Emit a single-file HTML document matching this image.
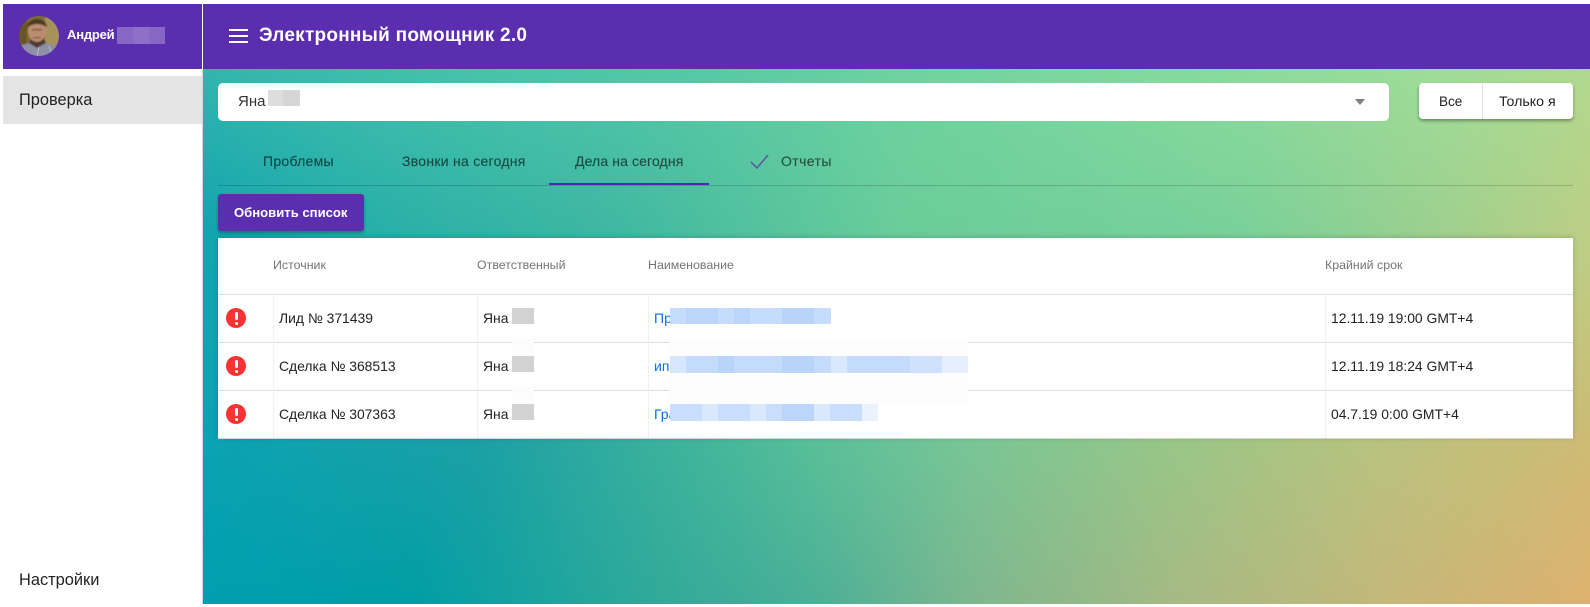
<!DOCTYPE html>
<html lang="ru"><head><meta charset="utf-8"><title>Электронный помощник 2.0</title>
<style>
html,body{margin:0;padding:0;background:#fff}
#p{position:relative;width:1590px;height:607px;overflow:hidden;background:#fff;font-family:"Liberation Sans",sans-serif;color:#222}
#p div,#p svg{position:absolute}
.t{white-space:nowrap;line-height:20px}
.bg{left:203px;top:69px;width:1387px;height:535px}
.r0{background:linear-gradient(90deg,#009fb0 0%,#009ea6 15%,#2aa89b 30%,#4eb097 45%,#7cb78f 55%,#a6ba84 70%,#c4b87a 85%,#dfb170 100%)}
.r1{background:linear-gradient(90deg,#0aa3b2 0%,#1c9fa5 20%,#3fb49b 35%,#5cc098 45%,#78c596 55%,#98c687 70%,#b9c27f 85%,#cdbb74 100%);-webkit-mask-image:linear-gradient(180deg,#000 370px,transparent 535px);mask-image:linear-gradient(180deg,#000 370px,transparent 535px)}
.r2{background:linear-gradient(90deg,#12a5b0 0%,#25aeaa 10%,#40b8a2 30%,#6acd9a 50%,#7ad19a 75%,#a0d08e 90%,#bccf86 100%);-webkit-mask-image:linear-gradient(180deg,#000 161px,transparent 370px);mask-image:linear-gradient(180deg,#000 161px,transparent 370px)}
.r3{background:linear-gradient(90deg,#33b5ad 0%,#48c3aa 20%,#56c8a6 35%,#6dd2a0 50%,#85d99d 70%,#a0dc98 90%,#b0d88e 100%);-webkit-mask-image:linear-gradient(180deg,#000 0,transparent 161px);mask-image:linear-gradient(180deg,#000 0,transparent 161px)}
.tab{font-size:14px;color:rgba(0,0,0,.6);letter-spacing:.27px;-webkit-text-stroke:.15px rgba(0,0,0,.4)}
.hd{font-size:12.4px;color:#757575}
.cell{font-size:13.9px;color:#222}
.ln{background:#e0e0e0;left:218px;width:1355px;height:1px}
.col{background:#f0f0f0;width:1px}
.err{left:226px;width:20px;height:20px;border-radius:50%;background:#f93232}
.err:before{content:"";position:absolute;left:8.5px;top:4px;width:3px;height:8px;background:#fff;border-radius:1.5px}
.err:after{content:"";position:absolute;left:8.5px;top:13.5px;width:3px;height:3px;background:#fff;border-radius:50%}
.link{font-size:14px;color:#0a6ff0}
</style></head><body>
<div id="p">
<div style="left:3px;top:4px;width:199px;height:65px;background:#5b2daf"></div>
<div style="left:203px;top:4px;width:1387px;height:65px;background:#5b2daf"></div>
<div class="bg r0"></div><div class="bg r1"></div><div class="bg r2"></div><div class="bg r3"></div>
<div style="left:202px;top:69px;width:1px;height:535px;background:#d8d8d8"></div>

<svg style="left:19px;top:16px" width="40" height="40" viewBox="0 0 40 40">
<defs><clipPath id="c"><circle cx="20" cy="20" r="20"/></clipPath><filter id="b" x="-10%" y="-10%" width="120%" height="120%"><feGaussianBlur stdDeviation=".8"/></filter></defs>
<g clip-path="url(#c)"><g filter="url(#b)"><rect x="-2" y="-2" width="44" height="44" fill="#7d6a35"/><rect x="26" y="-2" width="16" height="34" fill="#a7935a"/><rect x="-2" y="-2" width="10" height="30" fill="#6b5426"/>
<path d="M-2 42V31l12-4 8 3 8-3 16 4v11z" fill="#8f90a6"/>
<path d="M10 27l8 5 9-5-2-4H12z" fill="#4e3a30"/>
<ellipse cx="18" cy="15" rx="9" ry="11" fill="#bb8d70"/><path d="M8 12c0-6 5-9 10-9s10 3 10 8c-4-2-7-3-10-3s-7 1-10 4z" fill="#4c3a22"/>
<rect x="13" y="13" width="10" height="1.5" fill="#7a5240"/><rect x="14" y="21" width="8" height="1.5" fill="#8c5a48"/></g>
<path d="M3 34l9 5M20 31l-2 10M30 30l3 10" stroke="#d5d5e0" stroke-width="1" opacity=".6"/></g></svg>
<div class="t" style="left:67px;top:25px;font-size:13px;font-weight:bold;color:#fff;letter-spacing:-.2px">Андрей</div>
<svg style="left:117px;top:27px" width="48" height="17"><rect width="48" height="17" fill="#8767c4"/><rect x="16" width="16" height="17" fill="#8f70c8"/></svg>

<svg style="left:229px;top:29px" width="19" height="14"><path d="M0 1h19M0 7h19M0 13h19" stroke="#fff" stroke-width="2"/></svg>
<div class="t" style="left:259px;top:26px;font-size:19px;font-weight:bold;color:#fff;letter-spacing:.25px">Электронный помощник 2.0</div>

<div style="left:3px;top:76px;width:199px;height:48px;background:#e4e4e4"></div>
<div class="t" style="left:19px;top:90px;font-size:16.4px;color:#222">Проверка</div>
<div class="t" style="left:19px;top:570px;font-size:16.4px;color:#222">Настройки</div>

<div style="left:218px;top:83px;width:1171px;height:38px;background:#fff;border-radius:5px"></div>
<div class="t" style="left:238px;top:92px;font-size:15px;color:#333">Яна</div>
<svg style="left:268px;top:90px" width="32" height="16"><rect width="32" height="16" fill="#dddddd"/><rect x="15" width="17" height="16" fill="#d6d6d6"/></svg>
<svg style="left:1354px;top:99px" width="12" height="6"><path d="M1 0h10L6 6z" fill="#808080"/></svg>

<div style="left:1419px;top:83px;width:154px;height:36px;background:#fff;border-radius:4px;box-shadow:0 2px 3px rgba(0,0,0,.35)"></div>
<div style="left:1482px;top:83px;width:1px;height:36px;background:#e2e2e2"></div>
<div class="t" style="left:1439px;top:92px;font-size:13.5px;color:#222">Все</div>
<div class="t" style="left:1499px;top:92px;font-size:14.2px;color:#222">Только я</div>

<div class="t tab" style="left:263px;top:151px">Проблемы</div>
<div class="t tab" style="left:402px;top:151px">Звонки на сегодня</div>
<div class="t tab" style="left:575px;top:151px;letter-spacing:.12px">Дела на сегодня</div>
<svg style="left:750px;top:154px" width="20" height="16"><path d="M1 8l6 6L18 1" fill="none" stroke="#5f5aa8" stroke-width="1.6"/></svg>
<div class="t tab" style="left:781px;top:151px;letter-spacing:.4px">Отчеты</div>
<div style="left:218px;top:185px;width:1355px;height:1px;background:rgba(0,0,0,.16)"></div>
<div style="left:549px;top:183px;width:160px;height:2px;background:#5b21b6"></div>

<div style="left:218px;top:194px;width:146px;height:37px;background:#5b2daf;border-radius:3px;box-shadow:0 2px 3px rgba(0,0,0,.3)"></div>
<div class="t" style="left:234px;top:203px;font-size:13.1px;font-weight:bold;color:#fff">Обновить список</div>

<div style="left:218px;top:238px;width:1355px;height:201px;background:#fff;box-shadow:0 -1px 5px rgba(0,0,0,.16)"></div>
<div class="ln" style="top:294px"></div><div class="ln" style="top:342px"></div><div class="ln" style="top:390px"></div><div class="ln" style="top:438px;background:#d5d5d5"></div>
<div class="col" style="left:273px;top:295px;height:143px"></div><div class="col" style="left:477px;top:295px;height:143px"></div><div class="col" style="left:648px;top:295px;height:143px"></div><div class="col" style="left:1325px;top:295px;height:143px"></div>

<div class="t hd" style="left:273px;top:255px">Источник</div>
<div class="t hd" style="left:477px;top:255px">Ответственный</div>
<div class="t hd" style="left:648px;top:255px">Наименование</div>
<div class="t hd" style="left:1325px;top:255px">Крайний срок</div>

<div class="err" style="top:308px"></div><div class="err" style="top:356px"></div><div class="err" style="top:404px"></div>

<div class="t cell" style="left:279px;top:308px">Лид № 371439</div>
<div class="t cell" style="left:279px;top:356px">Сделка № 368513</div>
<div class="t cell" style="left:279px;top:404px">Сделка № 307363</div>
<div class="t cell" style="left:483px;top:308px">Яна</div>
<div class="t cell" style="left:483px;top:356px">Яна</div>
<div class="t cell" style="left:483px;top:404px">Яна</div>
<svg style="left:512px;top:308px" width="22" height="113"><path d="M0 31h22v17H0zM0 79h22v17H0z" fill="#fcfcfc"/><path d="M0 0h22v16H0zM0 48h22v16H0zM0 96h22v16H0z" fill="#d2d2d2"/></svg>
<div class="t link" style="left:654px;top:308px">Пр</div>
<div class="t link" style="left:654px;top:356px">ип</div>
<div class="t link" style="left:654px;top:404px">Гра</div>
<svg style="left:670px;top:308px" width="300" height="113">
<rect x="0" y="32" width="298" height="16" fill="#fdfdfd"/><rect x="0" y="65" width="298" height="31" fill="#fdfdfd"/>
<rect x="0" y="0" width="161" height="16" fill="#c6dcfc"/><rect x="16" y="0" width="32" height="16" fill="#bcd6fb"/><rect x="64" y="0" width="16" height="16" fill="#bcd6fb"/><rect x="112" y="0" width="32" height="16" fill="#b9d4fb"/>
<rect x="0" y="48" width="298" height="17" fill="#c4dbfc"/><rect x="0" y="48" width="16" height="17" fill="#d6e6fd"/><rect x="48" y="48" width="16" height="17" fill="#b9d4fb"/><rect x="112" y="48" width="32" height="17" fill="#b9d4fb"/><rect x="161" y="48" width="16" height="17" fill="#dae8fd"/><rect x="240" y="48" width="32" height="17" fill="#cfe1fc"/><rect x="272" y="48" width="26" height="17" fill="#e4eefd"/>
<rect x="0" y="96" width="192" height="17" fill="#c8defc"/><rect x="32" y="96" width="16" height="17" fill="#dae8fd"/><rect x="80" y="96" width="16" height="17" fill="#dae8fd"/><rect x="144" y="96" width="16" height="17" fill="#dae8fd"/><rect x="112" y="96" width="32" height="17" fill="#bcd6fb"/><rect x="192" y="96" width="16" height="17" fill="#eaf2fe"/>
</svg>
<div class="t cell" style="left:1331px;top:308px">12.11.19 19:00 GMT+4</div>
<div class="t cell" style="left:1331px;top:356px">12.11.19 18:24 GMT+4</div>
<div class="t cell" style="left:1331px;top:404px">04.7.19 0:00 GMT+4</div>
</div>
</body></html>
